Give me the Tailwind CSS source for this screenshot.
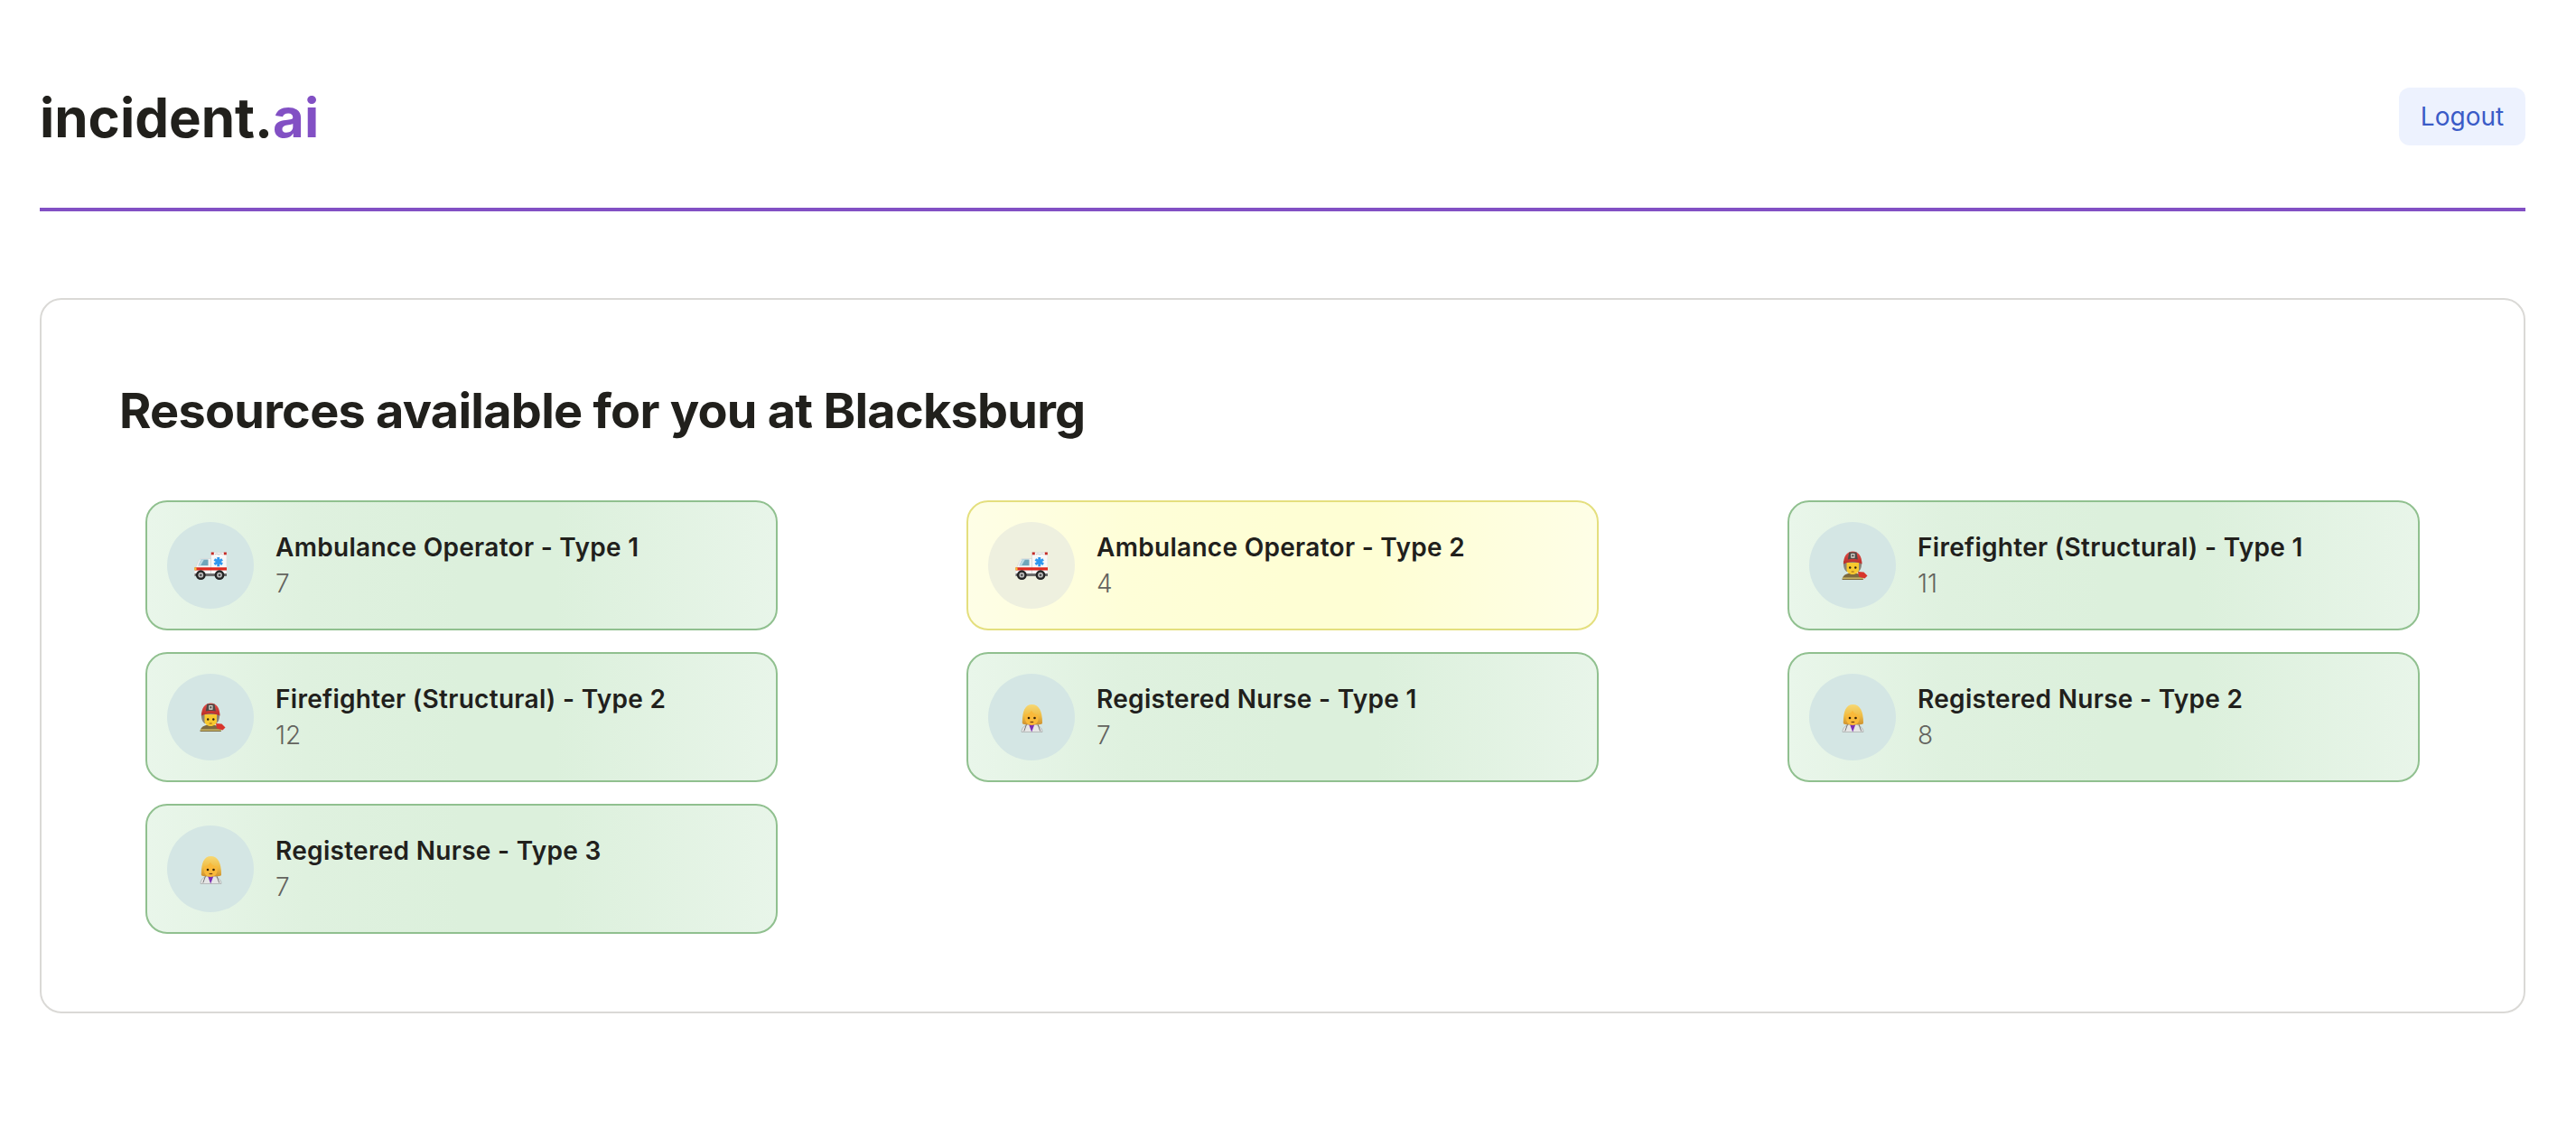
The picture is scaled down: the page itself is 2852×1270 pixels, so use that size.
<!DOCTYPE html>
<html lang="en">
<head>
<meta charset="utf-8">
<title>incident.ai</title>
<script src="https://cdn.jsdelivr.net/npm/@tailwindcss/browser@4"></script>
</head>
<body class="bg-white font-['Inter',sans-serif] text-[#21201c] h-[1270px] overflow-hidden">
<svg class="absolute w-0 h-0" aria-hidden="true">
  <defs>
    <linearGradient id="hair" x1="0" y1="0" x2="0" y2="1"><stop offset="0" stop-color="#f7d873"/><stop offset="0.55" stop-color="#efbd45"/><stop offset="1" stop-color="#cf9230"/></linearGradient>
    <linearGradient id="helm" x1="0" y1="0" x2="0" y2="1"><stop offset="0" stop-color="#e2504a"/><stop offset="1" stop-color="#b92c27"/></linearGradient>
    <symbol id="amb" viewBox="0 0 36 36">
      <path d="M18.500 3.500h16a1.500 1.500 0 0 1 1.500 1.500v24H18.500z" fill="#f8f8f8" stroke="#c4c4c4" stroke-width="0.400"/>
      <path d="M18.500 10.500H8.500C6.500 10.500 5 12 4 15l-2 4.500L0 23v6.500h18.500z" fill="#f4f4f4" stroke="#c4c4c4" stroke-width="0.400"/>
      <path d="M7.500 11.500H15.500v6.800H4.500z" fill="#6fa6bb"/>
      <path d="M7.500 11.500H11l-4 6.800H4.500z" fill="#bcdbe3"/>
      <path d="M0.500 20.300h35.500v3.300H0.500z" fill="#de2a20"/>
      <rect x="0.300" y="20.300" width="2.200" height="3" fill="#f5c33b"/>
      <rect x="18.800" y="3.500" width="3" height="2.800" fill="#c42b25"/>
      <rect x="32.800" y="3.500" width="3" height="2.800" fill="#c42b25"/>
      <path d="M23 6c1.500-1.500 2.500-1 4.200 0 1.700-1 2.800-1.500 4.300 0" stroke="#b5b5b5" stroke-width="0.700" fill="none"/>
      <path d="M25.300 9h2.900v2.600l2.200-1.300 1.500 2.500-2.300 1.300 2.300 1.300-1.500 2.500-2.200-1.300v2.600h-2.900v-2.600l-2.200 1.300-1.500-2.500 2.300-1.300-2.300-1.300 1.500-2.500 2.200 1.300z" fill="#2f97ee"/>
      <rect x="0.500" y="27" width="35.500" height="3" fill="#6c6c6c"/>
      <circle cx="7.300" cy="28.700" r="5.400" fill="#242424"/><circle cx="7.300" cy="28.700" r="2.900" fill="#bdbdbd"/><circle cx="7.300" cy="28.700" r="1.300" fill="#4a4a4a"/>
      <circle cx="28" cy="28.700" r="5.400" fill="#242424"/><circle cx="28" cy="28.700" r="2.900" fill="#bdbdbd"/><circle cx="28" cy="28.700" r="1.300" fill="#4a4a4a"/>
    </symbol>
    <symbol id="fire" viewBox="0 0 36 36">
      <path d="M6.500 34c0-4.500 4-7.500 11.500-7.500s11 2.500 12 7.500z" fill="#7d6a3f"/>
      <path d="M7 31.500h23v1.300H7z" fill="#d9c36a"/>
      <path d="M24 25l6.500 .5 4 4-3 3-6.500-2z" fill="#d8352c"/>
      <path d="M8 13c-.5 5 .5 10 3.500 12h13c3-2 4-7 3.500-12z" fill="#8a8377"/>
      <path d="M11.500 15h13.500v7.500c0 3-3 5.500-6.800 5.500s-6.700-2.500-6.700-5.500z" fill="#f8c92e"/>
      <circle cx="15.200" cy="20.500" r="1.200" fill="#2f2110"/><circle cx="21.300" cy="20.500" r="1.200" fill="#2f2110"/>
      <path d="M16.700 25h3" stroke="#9a5a18" stroke-width="1"/>
      <path d="M8 16.500C8 8 12 2.500 18.300 2.500S28.500 8 28.500 16.500c-6-3.500-14.500-3.500-20.500 0z" fill="url(#helm)"/>
      <path d="M14.200 3.500h8.300l1.300 8c-3.500-1-7.200-1-11 0z" fill="#4e4b47"/>
      <path d="M16.300 5h4.200v4.800h-4.200z" fill="#dedcd4"/>
      <path d="M17.500 6h1.800v2.500h-1.800z" fill="#44423e"/>
    </symbol>
    <symbol id="nurse" viewBox="0 0 36 36">
      <path d="M7 34.500c0-5 4-8.500 11-9 7 .5 12 4 12 9z" fill="#e6e6e6" stroke="#8f8f8f" stroke-width="0.500"/>
      <path d="M15 26l3.200 8.500 3.200-8.500z" fill="#7a2fb2"/>
      <path d="M12.500 26l-2.700 7.500M25 26l2.700 7.500" stroke="#777" stroke-width="1" fill="none"/>
      <path d="M7.800 24.500C7.800 11 11 4 18.500 4s11.500 7 11.500 20.500c0 1-1.500 1.700-3.500 1.700h-15c-2 0-3.700-.7-3.700-1.700z" fill="url(#hair)"/>
      <path d="M11 15.500c3.500-.8 5.500-2.400 7-4.800 1 2.800 4 4.300 7.500 4.800v4.800c0 3.600-3.200 6.700-7.300 6.700s-7.200-3.100-7.200-6.700z" fill="#f9b93a"/>
      <circle cx="15" cy="19" r="1.300" fill="#362208"/><circle cx="21.500" cy="19" r="1.300" fill="#362208"/>
      <path d="M16.600 23.500h3.600" stroke="#6d3a10" stroke-width="1.200"/>
    </symbol>
  </defs>
</svg>

<div class="pl-[44px] pr-[56px]">
  <header class="h-[234px] pt-[28px] flex items-center justify-between border-b-4 border-[#8250c4]">
    <h1 class="mt-[2px] text-[60px] leading-none font-bold">incident.<span class="text-[#8250c4]">ai</span></h1>
    <button class="w-[140px] h-[64px] rounded-[12px] bg-[#edf2fe] text-[#3a5bc7] text-[28px] leading-none">Logout</button>
  </header>

  <main class="mt-[96px] h-[792px] border-2 border-[#dad9d6] rounded-[24px]">
    <h2 class="ml-[86px] mt-[91px] text-[54px] leading-[64px] font-bold tracking-[-0.75px]">Resources available for you at Blacksburg</h2>
    <div class="mt-[67px] px-[115px] grid grid-cols-[700px_700px_700px] justify-between gap-y-[24px]">

      <div class="h-[144px] px-[22px] flex items-center gap-[24px] rounded-[24px] border-2 border-[#90c08f] bg-[linear-gradient(90deg,#e9f6ea_0%,#dff1df_25%,#dcf0dc_50%,#dcf0dc_65%,#e8f5e9_100%)]">
        <div class="w-[96px] h-[96px] rounded-full bg-[#d4e6e4] flex items-center justify-center"><svg class="w-[36px] h-[36px]"><use href="#amb"/></svg></div>
        <div><div class="text-[28px] leading-[40px] font-semibold tracking-[0.3px]">Ambulance Operator - Type 1</div><div class="text-[28px] leading-[40px] font-light text-[#63635e]">7</div></div>
      </div>

      <div class="h-[144px] px-[22px] flex items-center gap-[24px] rounded-[24px] border-2 border-[#e4df7e] bg-[linear-gradient(90deg,#fefee6_0%,#fefed8_25%,#fefed4_50%,#fefed4_65%,#fefee6_100%)]">
        <div class="w-[96px] h-[96px] rounded-full bg-[#eef0df] flex items-center justify-center"><svg class="w-[36px] h-[36px]"><use href="#amb"/></svg></div>
        <div><div class="text-[28px] leading-[40px] font-semibold tracking-[0.3px]">Ambulance Operator - Type 2</div><div class="text-[28px] leading-[40px] font-light text-[#63635e]">4</div></div>
      </div>

      <div class="h-[144px] px-[22px] flex items-center gap-[24px] rounded-[24px] border-2 border-[#90c08f] bg-[linear-gradient(90deg,#e9f6ea_0%,#dff1df_25%,#dcf0dc_50%,#dcf0dc_65%,#e8f5e9_100%)]">
        <div class="w-[96px] h-[96px] rounded-full bg-[#d4e6e4] flex items-center justify-center"><svg class="w-[36px] h-[36px]"><use href="#fire"/></svg></div>
        <div><div class="text-[28px] leading-[40px] font-semibold tracking-[0.3px]">Firefighter (Structural) - Type 1</div><div class="text-[28px] leading-[40px] font-light text-[#63635e]">11</div></div>
      </div>

      <div class="h-[144px] px-[22px] flex items-center gap-[24px] rounded-[24px] border-2 border-[#90c08f] bg-[linear-gradient(90deg,#e9f6ea_0%,#dff1df_25%,#dcf0dc_50%,#dcf0dc_65%,#e8f5e9_100%)]">
        <div class="w-[96px] h-[96px] rounded-full bg-[#d4e6e4] flex items-center justify-center"><svg class="w-[36px] h-[36px]"><use href="#fire"/></svg></div>
        <div><div class="text-[28px] leading-[40px] font-semibold tracking-[0.3px]">Firefighter (Structural) - Type 2</div><div class="text-[28px] leading-[40px] font-light text-[#63635e]">12</div></div>
      </div>

      <div class="h-[144px] px-[22px] flex items-center gap-[24px] rounded-[24px] border-2 border-[#90c08f] bg-[linear-gradient(90deg,#e9f6ea_0%,#dff1df_25%,#dcf0dc_50%,#dcf0dc_65%,#e8f5e9_100%)]">
        <div class="w-[96px] h-[96px] rounded-full bg-[#d4e6e4] flex items-center justify-center"><svg class="w-[36px] h-[36px]"><use href="#nurse"/></svg></div>
        <div><div class="text-[28px] leading-[40px] font-semibold tracking-[0.3px]">Registered Nurse - Type 1</div><div class="text-[28px] leading-[40px] font-light text-[#63635e]">7</div></div>
      </div>

      <div class="h-[144px] px-[22px] flex items-center gap-[24px] rounded-[24px] border-2 border-[#90c08f] bg-[linear-gradient(90deg,#e9f6ea_0%,#dff1df_25%,#dcf0dc_50%,#dcf0dc_65%,#e8f5e9_100%)]">
        <div class="w-[96px] h-[96px] rounded-full bg-[#d4e6e4] flex items-center justify-center"><svg class="w-[36px] h-[36px]"><use href="#nurse"/></svg></div>
        <div><div class="text-[28px] leading-[40px] font-semibold tracking-[0.3px]">Registered Nurse - Type 2</div><div class="text-[28px] leading-[40px] font-light text-[#63635e]">8</div></div>
      </div>

      <div class="h-[144px] px-[22px] flex items-center gap-[24px] rounded-[24px] border-2 border-[#90c08f] bg-[linear-gradient(90deg,#e9f6ea_0%,#dff1df_25%,#dcf0dc_50%,#dcf0dc_65%,#e8f5e9_100%)]">
        <div class="w-[96px] h-[96px] rounded-full bg-[#d4e6e4] flex items-center justify-center"><svg class="w-[36px] h-[36px]"><use href="#nurse"/></svg></div>
        <div><div class="text-[28px] leading-[40px] font-semibold tracking-[0.3px]">Registered Nurse - Type 3</div><div class="text-[28px] leading-[40px] font-light text-[#63635e]">7</div></div>
      </div>

    </div>
  </main>
</div>
</body>
</html>
